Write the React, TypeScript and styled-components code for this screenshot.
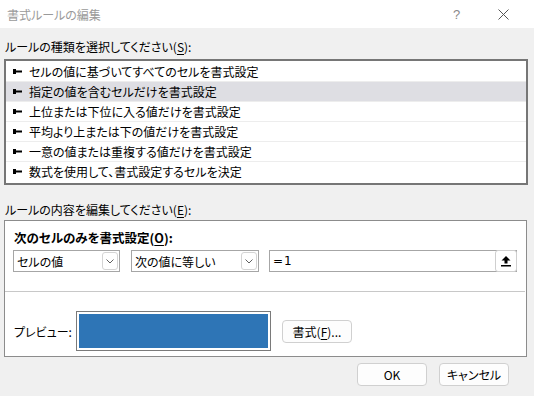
import React from "react";
import styled, { createGlobalStyle } from "styled-components";

const Global = createGlobalStyle`
  html, body {
    margin: 0;
    padding: 0;
    background: #f0f0f0;
  }
  body {
    font-family: "Noto Sans CJK JP", "Noto Sans", sans-serif;
    font-size: 12px;
    color: #000;
    font-feature-settings: "palt";
  }
`;

const rules = [
  "セルの値に基づいてすべてのセルを書式設定",
  "指定の値を含むセルだけを書式設定",
  "上位または下位に入る値だけを書式設定",
  "平均より上または下の値だけを書式設定",
  "一意の値または重複する値だけを書式設定",
  "数式を使用して、書式設定するセルを決定",
];

const Bullet = () => (
  <svg width="9" height="5" viewBox="0 0 9 5">
    <rect x="0" y="0" width="3" height="5" fill="#000" />
    <rect x="3" y="1.5" width="6" height="2" fill="#000" />
  </svg>
);

const Chevron = () => (
  <svg width="8" height="5" viewBox="0 0 8 5">
    <polyline points="0.5,0.5 4,4 7.5,0.5" fill="none" stroke="#606060" strokeWidth="1" />
  </svg>
);

const UpArrow = () => (
  <svg width="10" height="12" viewBox="0 0 10 12">
    <path d="M5 1 L9.5 5.5 H6.5 V8.5 H3.5 V5.5 H0.5 Z" fill="#000" />
    <rect x="0" y="10" width="10" height="1.5" fill="#000" />
  </svg>
);

const CloseIcon = () => (
  <svg width="11" height="11" viewBox="0 0 11 11">
    <path d="M0.5 0.5 L10.5 10.5 M10.5 0.5 L0.5 10.5" stroke="#555" strokeWidth="1" />
  </svg>
);

const App = () => {
  return (
    <Window>
      <Global />
      <TitleBar>
        <Title>書式ルールの編集</Title>
        <Help>?</Help>
        <Close>
          <CloseIcon />
        </Close>
      </TitleBar>
      <Body>
        <Label top={11}>
          ルールの種類を選択してください(<U>S</U>):
        </Label>
        <ListBox>
          {rules.map((r, i) => (
            <Row key={r} selected={i === 1} last={i === rules.length - 1}>
              <Bullet />
              <span>{r}</span>
            </Row>
          ))}
        </ListBox>
        <Label top={17}>
          ルールの内容を編集してください(<U>E</U>):
        </Label>
        <Panel>
          <Heading>
            次のセルのみを書式設定(<U>O</U>):
          </Heading>
          <ComboRow>
            <Combo w={107}>
              <span>セルの値</span>
              <DropBtn>
                <Chevron />
              </DropBtn>
            </Combo>
            <Combo w={128}>
              <span>次の値に等しい</span>
              <DropBtn>
                <Chevron />
              </DropBtn>
            </Combo>
            <Input>
              <Formula>=1</Formula>
              <RefBtn>
                <UpArrow />
              </RefBtn>
            </Input>
          </ComboRow>
          <Separator />
          <PreviewRow>
            <PreviewLabel>プレビュー:</PreviewLabel>
            <PreviewBox>
              <PreviewFill />
            </PreviewBox>
            <Button w={70}>
              書式(<U>F</U>)...
            </Button>
          </PreviewRow>
        </Panel>
        <Footer>
          <Button w={70}>OK</Button>
          <Button w={70}>キャンセル</Button>
        </Footer>
      </Body>
    </Window>
  );
};

export default App;

const Window = styled.div`
  width: 534px;
  height: 396px;
  background: #f0f0f0;
  overflow: hidden;
`;

const TitleBar = styled.div`
  height: 28px;
  background: #fff;
  display: flex;
  align-items: center;
  padding-left: 7px;
`;

const Title = styled.div`
  flex: 1;
  color: #9a9a9a;
  font-size: 12px;
`;

const Help = styled.div`
  color: #8a8a8a;
  font-family: "Liberation Sans", sans-serif;
  font-size: 13px;
  width: 14px;
  margin-right: 31px;
`;

const Close = styled.div`
  display: flex;
  align-items: center;
  margin-right: 25px;
`;

const Body = styled.div`
  padding: 0 6px 0 4px;
`;

const Label = styled.div<{ top: number }>`
  height: 16px;
  line-height: 16px;
  margin-top: ${({ top }) => top}px;
  padding-left: 1px;
  margin-bottom: 4px;
`;

const U = styled.span`
  text-decoration: underline;
  text-underline-offset: 2px;
`;

const ListBox = styled.div`
  width: 520px;
  height: 121px;
  border: 2px solid #767676;
  background: #fff;
  padding-top: 1px;
`;

const Row = styled.div<{ selected?: boolean; last?: boolean }>`
  height: 19px;
  display: flex;
  align-items: center;
  gap: 7px;
  padding-left: 7px;
  background: ${({ selected }) => (selected ? "#dedee3" : "#fff")};
  border-bottom: 1px solid ${({ last }) => (last ? "transparent" : "#ededed")};
  white-space: nowrap;
`;

const Panel = styled.div`
  width: 521px;
  height: 127px;
  border: 1px solid #8c8c8c;
  background: #fff;
  margin-top: -2px;
  padding-top: 8px;
`;

const Heading = styled.div`
  font-weight: bold;
  font-size: 12.5px;
  line-height: 17px;
  padding-left: 9px;
  height: 17px;
`;

const ComboRow = styled.div`
  display: flex;
  gap: 11px;
  padding-left: 8px;
  margin-top: 4px;
`;

const Combo = styled.div<{ w: number }>`
  width: ${({ w }) => w}px;
  height: 22px;
  box-sizing: border-box;
  border: 1px solid #a6a6a6;
  display: flex;
  align-items: center;
  justify-content: space-between;
  padding: 0 1px 0 3px;
  background: #fff;
`;

const DropBtn = styled.div`
  width: 16px;
  height: 18px;
  box-sizing: border-box;
  border: 1px solid #d4d4d4;
  border-radius: 3px;
  display: flex;
  align-items: center;
  justify-content: center;
`;

const Input = styled.div`
  width: 248px;
  height: 22px;
  box-sizing: border-box;
  margin-left: -1px;
  border: 1px solid #a6a6a6;
  display: flex;
  align-items: center;
  justify-content: space-between;
  padding-left: 3px;
`;

const Formula = styled.span`
  font-family: "DejaVu Sans", sans-serif;
  font-size: 12px;
  letter-spacing: 1px;
`;

const RefBtn = styled.div`
  width: 22px;
  height: 22px;
  box-sizing: border-box;
  margin-right: -1px;
  border: 1px solid #cfcfcf;
  border-radius: 3px;
  background: #fff;
  display: flex;
  align-items: center;
  justify-content: center;
`;

const Separator = styled.div`
  height: 1px;
  background: #c8c8c8;
  margin: 19px 1px 0 0;
`;

const PreviewRow = styled.div`
  display: flex;
  align-items: center;
  margin-top: 19px;
  padding-left: 9px;
`;

const PreviewLabel = styled.div`
  width: 62px;
  white-space: nowrap;
`;

const PreviewBox = styled.div`
  width: 195px;
  height: 40px;
  box-sizing: border-box;
  border: 1px solid #7a7a7a;
  padding: 2px;
  margin-right: 11px;
`;

const PreviewFill = styled.div`
  width: 100%;
  height: 100%;
  background: #2e75b6;
`;

const Button = styled.div<{ w: number }>`
  width: ${({ w }) => w}px;
  height: 23px;
  box-sizing: border-box;
  border: 1px solid #d0d0d0;
  border-radius: 4px;
  background: #fdfdfd;
  display: flex;
  align-items: center;
  justify-content: center;
  white-space: nowrap;
`;

const Footer = styled.div`
  display: flex;
  justify-content: flex-end;
  gap: 12px;
  margin-top: 6px;
  padding-right: 19px;
`;
